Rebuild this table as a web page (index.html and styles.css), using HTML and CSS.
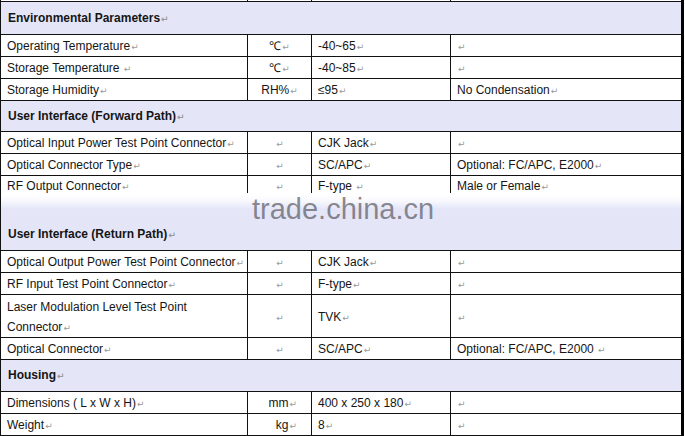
FILE: index.html
```html
<!DOCTYPE html>
<html>
<head>
<meta charset="utf-8">
<link rel="stylesheet" href="styles.css">
</head>
<body>
<div class="page">
<table class="spec">
  <colgroup>
    <col class="c1"><col class="c2"><col class="c3"><col class="c4">
  </colgroup>
  <tr class="stub"><td></td><td></td><td></td><td></td></tr>
  <tr class="hd hd1"><td colspan="4">Environmental Parameters<span class="pm">↵</span></td></tr>
  <tr><td>Operating Temperature<span class="pm">↵</span></td><td class="u">℃<span class="pm">↵</span></td><td>-40~65<span class="pm">↵</span></td><td><span class="pm">↵</span></td></tr>
  <tr><td>Storage Temperature <span class="pm">↵</span></td><td class="u">℃<span class="pm">↵</span></td><td>-40~85<span class="pm">↵</span></td><td><span class="pm">↵</span></td></tr>
  <tr><td>Storage Humidity<span class="pm">↵</span></td><td class="u">RH%<span class="pm">↵</span></td><td>≤95<span class="pm">↵</span></td><td>No Condensation<span class="pm">↵</span></td></tr>
  <tr class="hd hd2"><td colspan="4">User Interface (Forward Path)<span class="pm">↵</span></td></tr>
  <tr><td>Optical Input Power Test Point Connector<span class="pm">↵</span></td><td class="u"><span class="pm">↵</span></td><td>CJK Jack<span class="pm">↵</span></td><td><span class="pm">↵</span></td></tr>
  <tr><td>Optical Connector Type<span class="pm">↵</span></td><td class="u"><span class="pm">↵</span></td><td>SC/APC<span class="pm">↵</span></td><td>Optional: FC/APC, E2000<span class="pm">↵</span></td></tr>
  <tr class="cut"><td><div class="cutin">RF Output Connector<span class="pm">↵</span></div></td><td class="u"><div class="cutin"><span class="pm">↵</span></div></td><td><div class="cutin">F-type <span class="pm">↵</span></div></td><td><div class="cutin">Male or Female<span class="pm">↵</span></div></td></tr>
  <tr class="hd seam"><td colspan="4">User Interface (Return Path)<span class="pm">↵</span></td></tr>
  <tr><td>Optical Output Power Test Point Connector<span class="pm">↵</span></td><td class="u"><span class="pm">↵</span></td><td>CJK Jack<span class="pm">↵</span></td><td><span class="pm">↵</span></td></tr>
  <tr><td>RF Input Test Point Connector<span class="pm">↵</span></td><td class="u"><span class="pm">↵</span></td><td>F-type<span class="pm">↵</span></td><td><span class="pm">↵</span></td></tr>
  <tr class="tall"><td>Laser Modulation Level Test Point<br>Connector<span class="pm">↵</span></td><td class="u"><span class="pm">↵</span></td><td>TVK<span class="pm">↵</span></td><td><span class="pm">↵</span></td></tr>
  <tr><td>Optical Connector<span class="pm">↵</span></td><td class="u"><span class="pm">↵</span></td><td>SC/APC<span class="pm">↵</span></td><td>Optional: FC/APC, E2000 <span class="pm">↵</span></td></tr>
  <tr class="hd hd3"><td colspan="4">Housing<span class="pm">↵</span></td></tr>
  <tr><td>Dimensions ( L x W x H)<span class="pm">↵</span></td><td class="u r">mm<span class="pm">↵</span></td><td>400 x 250 x 180<span class="pm">↵</span></td><td><span class="pm">↵</span></td></tr>
  <tr><td>Weight<span class="pm">↵</span></td><td class="u r">kg<span class="pm">↵</span></td><td>8<span class="pm">↵</span></td><td><span class="pm">↵</span></td></tr>
</table>
<div class="watermark">trade.china.cn</div>
</div>
</body>
</html>
```
FILE: styles.css
```css
html, body {
  margin: 0;
  padding: 0;
  background: #ffffff;
}
.page {
  position: relative;
  width: 685px;
  height: 436px;
  overflow: hidden;
}
.spec {
  border-collapse: collapse;
  table-layout: fixed;
  width: 682px;
  font-family: "Liberation Sans", Arial, sans-serif;
  font-size: 12px;
  color: #151515;
  border-left: 1px solid #111;
  border-right: 3px solid #000;
}
.c1 { width: 247px; }
.c2 { width: 64px; }
.c3 { width: 139px; }
.c4 { width: 232px; }
.spec td {
  border: 1px solid #111;
  padding: 0 6px;
  height: 21px;
  line-height: 20px;
  vertical-align: middle;
  white-space: nowrap;
  overflow: hidden;
}
.spec td.u { text-align: center; }
.spec td.u.r { text-align: right; padding-right: 14px; }
.spec .stub td {
  height: 1px;
  line-height: 0;
  font-size: 0;
  padding: 0;
  border-top: none;
}
.spec .hd td {
  background: #e4e6f8;
  font-weight: bold;
  padding-left: 7px;
}
.spec .hd1 td { height: 32px; }
.spec .hd2 td { height: 30px; }
.spec .hd3 td { height: 29px; padding-bottom: 2px; }
.spec .tall td { line-height: 20px; height: 40px; padding-top: 2px; }
.spec .cut td {
  height: 17px;
  line-height: 20px;
  border-bottom: none;
  vertical-align: top;
}
.cutin {
  height: 17px;
  line-height: 20px;
  overflow: visible;
}
.spec .seam td {
  height: 20px;
  line-height: 20px;
  padding-top: 31px;
  padding-bottom: 6px;
  border-top: none;
  background: linear-gradient(#ffffff 0px, #fbfbfe 6px, #e4e6f8 16px, #e4e6f8 100%);
}
.pm {
  color: #9a9a9a;
  font-family: "DejaVu Sans", sans-serif;
  font-size: 9px;
  line-height: 0;
  margin-left: 1px;
}
.watermark {
  position: absolute;
  left: 252px;
  top: 192px;
  font-family: "Liberation Sans", Arial, sans-serif;
  font-size: 29px;
  line-height: 34px;
  color: rgba(100, 100, 110, 0.75);
}
```
